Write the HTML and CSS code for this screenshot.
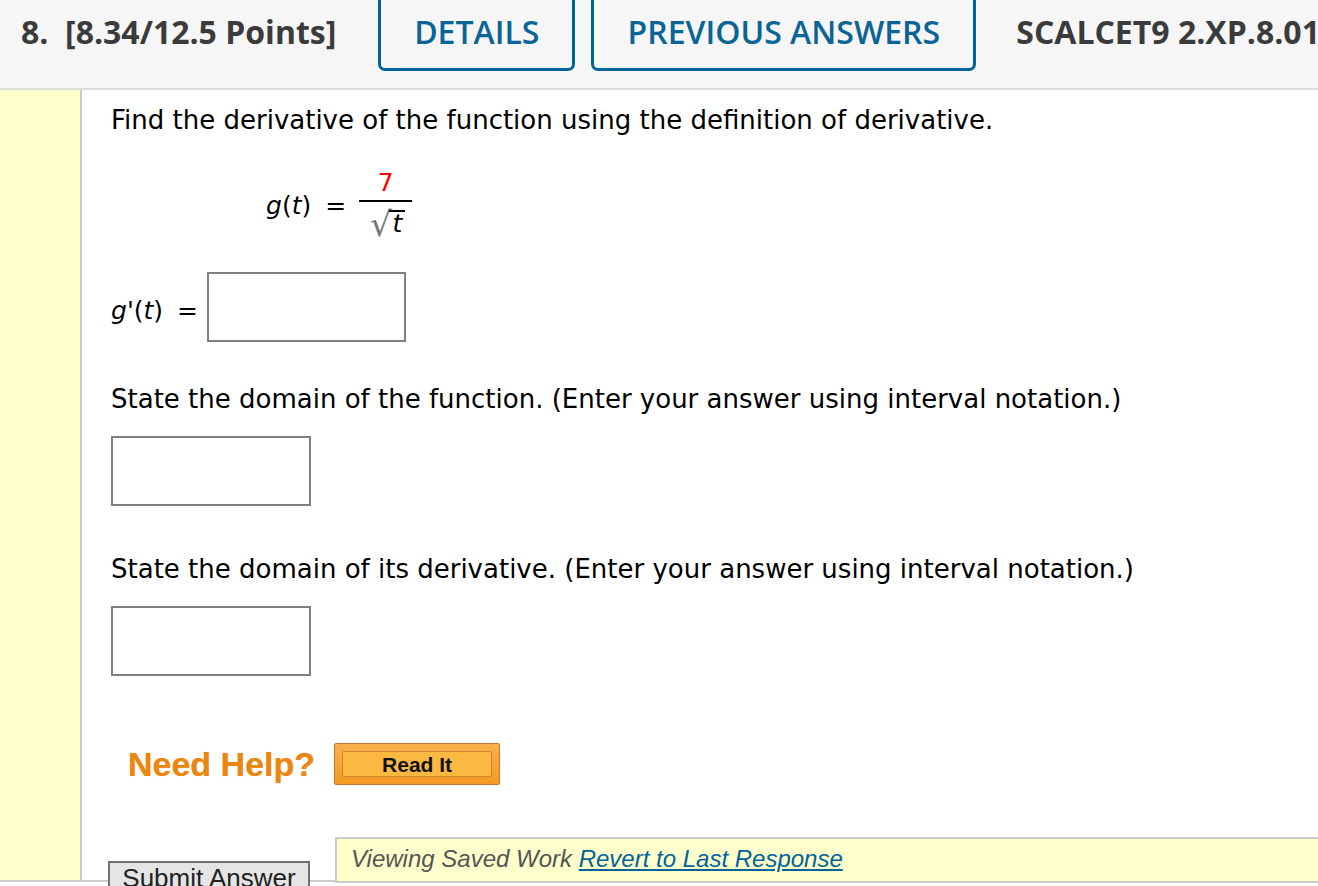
FILE: index.html
```html
<!DOCTYPE html>
<html>
<head>
<meta charset="utf-8">
<link rel="stylesheet" href="styles.css">
</head>
<body>
<div class="header">
  <div class="qtitle">8.&nbsp; [8.34/12.5 Points]</div>
  <div class="tab tab-details">DETAILS</div>
  <div class="tab tab-prev">PREVIOUS ANSWERS</div>
  <div class="qcode">SCALCET9 2.XP.8.01</div>
</div>
<div class="main">
  <div class="strip"></div>
  <div class="content">
    <p class="prompt p-first">Find the derivative of the function using the definition of derivative.</p>
    <div class="equation">
      <span class="lhs"><i>g</i>(<i>t</i>)</span>
      <span class="eq">=</span>
      <span class="frac">
        <span class="num">7</span>
        <span class="den"><span class="radsign">√</span><span class="rad"><i>t</i></span></span>
      </span>
    </div>
    <div class="answer-row">
      <span class="lhs"><i>g</i>'(<i>t</i>)</span>
      <span class="eq">=</span>
      <span class="box box-wide"></span>
    </div>
    <p class="prompt p-domain">State the domain of the function. (Enter your answer using interval notation.)</p>
    <div class="box box-small"></div>
    <p class="prompt p-deriv">State the domain of its derivative. (Enter your answer using interval notation.)</p>
    <div class="box box-small"></div>
    <div class="help-row">
      <span class="need-help">Need Help?</span>
      <span class="read-it"><span class="read-inner">Read It</span></span>
    </div>
    <div class="bottom-row">
      <span class="submit">Submit Answer</span>
      <div class="saved">Viewing Saved Work <a class="revert" href="#">Revert to Last Response</a></div>
    </div>
  </div>
</div>
</body>
</html>
```
FILE: styles.css
```css
html, body {
  margin: 0;
  padding: 0;
  background: #ffffff;
  overflow: hidden;
}
body {
  width: 1318px;
  height: 886px;
  font-family: "DejaVu Sans", Verdana, sans-serif;
}
.header {
  display: flex;
  align-items: flex-start;
  height: 88px;
  background: #f6f6f6;
  border-bottom: 2px solid #dddddd;
  font-family: "Open Sans", sans-serif;
  font-weight: 600;
  font-size: 32px;
  white-space: nowrap;
}
.header > div {
  flex: none;
}
.qtitle {
  color: #3b3b3b;
  padding-left: 21px;
  line-height: 64px;
  font-weight: 700;
}
.tab {
  box-sizing: border-box;
  height: 71px;
  border: 3px solid #00649a;
  border-top: none;
  border-radius: 0 0 7px 7px;
  color: #0a6496;
  line-height: 64px;
  text-align: center;
}
.tab-details {
  margin-left: 42px;
  width: 197px;
}
.tab-prev {
  margin-left: 16px;
  width: 385px;
}
.qcode {
  color: #3b3b3b;
  font-weight: 700;
  margin-left: 40px;
  line-height: 64px;
}
.main {
  display: flex;
  height: 790px;
  border-bottom: 2px solid #cccccc;
}
.strip {
  width: 80px;
  flex: none;
  background: #ffffcc;
  border-right: 2px solid #cccccc;
}
.content {
  flex: 1;
  padding-left: 29px;
  color: #000;
  font-size: 26px;
}
.prompt {
  margin: 0;
  line-height: 32px;
  white-space: nowrap;
}
.p-first {
  padding-top: 14px;
}
.equation {
  display: flex;
  align-items: center;
  margin-left: 155px;
  margin-top: 32px;
  height: 74px;
}
.lhs {
  font-size: 25px;
}
.lhs i, .rad i {
  font-style: italic;
}
.eq {
  margin: 0 13px 0 14px;
  font-size: 25px;
}
.frac {
  display: inline-flex;
  flex-direction: column;
  align-items: center;
}
.num {
  color: #ff0000;
  line-height: 28px;
  padding-bottom: 3px;
  border-bottom: 2px solid #000;
  width: 53px;
  text-align: center;
  font-size: 25px;
}
.den {
  display: inline-flex;
  align-items: flex-end;
  padding-top: 4px;
  padding-left: 4px;
}
.radsign {
  color: #777;
  font-size: 34px;
  line-height: 36px;
  margin-right: -3px;
}
.rad {
  border-top: 2px solid #000;
  line-height: 24px;
  font-size: 25px;
  padding: 0 3px 0 4px;
  margin-bottom: 6px;
}
.answer-row {
  display: flex;
  align-items: center;
  margin-top: 30px;
}
.answer-row .lhs {
  padding-top: 6px;
}
.answer-row .eq {
  margin: 6px 9px 0 14px;
}
.box {
  box-sizing: border-box;
  border: 2px solid #808080;
  background: #fff;
  display: block;
}
.box-wide {
  width: 199px;
  height: 70px;
}
.box-small {
  width: 200px;
  height: 70px;
}
.p-domain {
  margin-top: 41px;
  margin-bottom: 21px;
}
.p-deriv {
  margin-top: 47px;
  margin-bottom: 21px;
}
.help-row {
  display: flex;
  align-items: center;
  margin-top: 67px;
  margin-left: 17px;
}
.need-help {
  font-family: "Liberation Sans", Arial, sans-serif;
  font-weight: 700;
  font-size: 34px;
  color: #ea8712;
  text-shadow: 0 0 1px rgba(234, 135, 18, 0.6);
}
.read-it {
  margin-left: 19px;
  box-sizing: border-box;
  width: 166px;
  height: 42px;
  padding: 7px;
  background: linear-gradient(#f9b04a, #f39a24);
  border: 1px solid #c2772a;
  border-radius: 2px;
  display: flex;
}
.read-inner {
  flex: 1;
  box-sizing: border-box;
  border: 1px solid #c88a36;
  border-radius: 2px;
  background: #fbb942;
  font-family: "Liberation Sans", Arial, sans-serif;
  font-weight: 700;
  font-size: 21px;
  color: #111;
  text-align: center;
  line-height: 25px;
}
.bottom-row {
  display: flex;
  align-items: flex-start;
  margin-top: 52px;
}
.submit {
  box-sizing: border-box;
  margin-left: -3px;
  margin-top: 24px;
  width: 202px;
  height: 40px;
  border: 2px solid #707070;
  background: #e5e5e5;
  font-family: "Liberation Sans", Arial, sans-serif;
  font-size: 26px;
  color: #222;
  text-align: center;
  line-height: 30px;
}
.saved {
  flex: 1;
  margin-left: 25px;
  box-sizing: border-box;
  height: 46px;
  border: 2px solid #cccccc;
  border-right: none;
  background: #ffffcc;
  font-family: "Liberation Sans", Arial, sans-serif;
  font-style: italic;
  font-size: 24px;
  color: #555;
  padding-left: 14px;
  line-height: 40px;
  white-space: nowrap;
}
.revert {
  color: #00649a;
  text-decoration: underline;
}
```
